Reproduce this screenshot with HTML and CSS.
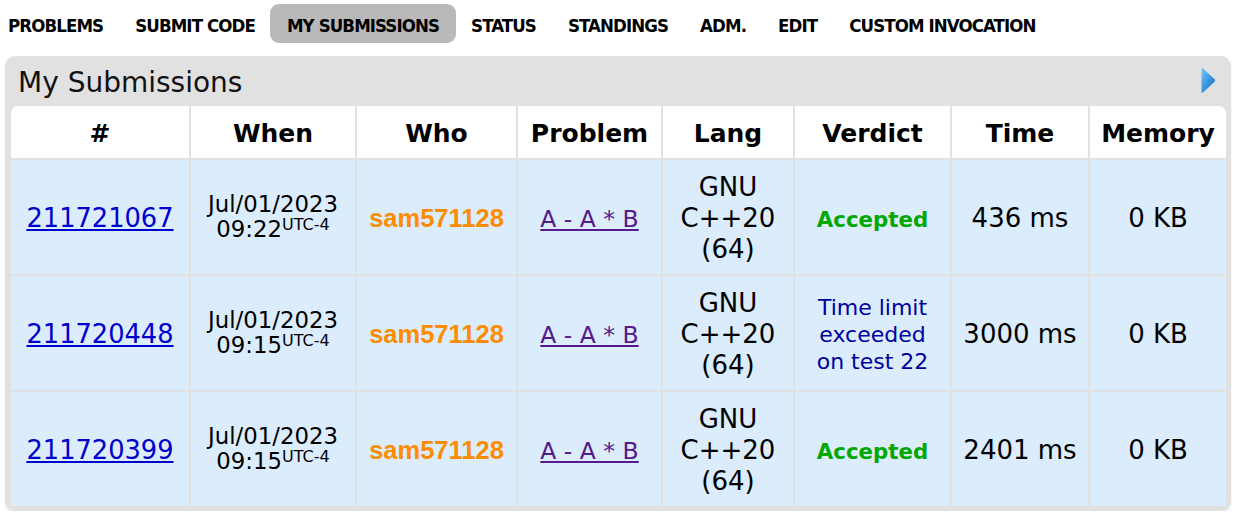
FILE: index.html
```html
<!DOCTYPE html>
<html>
<head>
<meta charset="utf-8">
<title>My Submissions</title>
<link rel="stylesheet" href="styles.css">
</head>
<body>
<nav class="menu">
  <a class="menu-item">PROBLEMS</a>
  <a class="menu-item">SUBMIT CODE</a>
  <a class="menu-item active">MY SUBMISSIONS</a>
  <a class="menu-item">STATUS</a>
  <a class="menu-item">STANDINGS</a>
  <a class="menu-item">ADM.</a>
  <a class="menu-item">EDIT</a>
  <a class="menu-item">CUSTOM INVOCATION</a>
</nav>
<div class="roundbox">
  <div class="caption">
    <span class="title">My Submissions</span>
    <svg class="arrow" width="16" height="27" viewBox="0 0 16 27">
      <defs>
        <linearGradient id="g" x1="0" y1="0" x2="1" y2="1">
          <stop offset="0" stop-color="#7cc3f5"/>
          <stop offset="0.5" stop-color="#3c97e0"/>
          <stop offset="1" stop-color="#1c6cc0"/>
        </linearGradient>
      </defs>
      <path d="M1.5 2 Q1.5 0.5 3 1.6 L14.6 12.2 Q15.6 13.5 14.6 14.8 L3 25.4 Q1.5 26.5 1.5 25 Z" fill="url(#g)"/>
    </svg>
  </div>
  <table class="status">
    <colgroup>
      <col class="c-id"><col class="c-when"><col class="c-who"><col class="c-prob">
      <col class="c-lang"><col class="c-verdict"><col class="c-time"><col class="c-mem">
    </colgroup>
    <thead>
      <tr>
        <th class="first">#</th><th>When</th><th>Who</th><th>Problem</th>
        <th>Lang</th><th>Verdict</th><th>Time</th><th class="last">Memory</th>
      </tr>
    </thead>
    <tbody>
      <tr>
        <td><a class="sid" href="#">211721067</a></td>
        <td class="when">Jul/01/2023<br>09:22<sup>UTC-4</sup></td>
        <td><span class="who">sam571128</span></td>
        <td><a class="prob" href="#">A - A * B</a></td>
        <td class="lang">GNU<br>C++20<br>(64)</td>
        <td><span class="ok">Accepted</span></td>
        <td>436 ms</td>
        <td>0 KB</td>
      </tr>
      <tr>
        <td><a class="sid" href="#">211720448</a></td>
        <td class="when">Jul/01/2023<br>09:15<sup>UTC-4</sup></td>
        <td><span class="who">sam571128</span></td>
        <td><a class="prob" href="#">A - A * B</a></td>
        <td class="lang">GNU<br>C++20<br>(64)</td>
        <td><span class="tle">Time limit<br>exceeded<br>on test 22</span></td>
        <td>3000 ms</td>
        <td>0 KB</td>
      </tr>
      <tr>
        <td><a class="sid" href="#">211720399</a></td>
        <td class="when">Jul/01/2023<br>09:15<sup>UTC-4</sup></td>
        <td><span class="who">sam571128</span></td>
        <td><a class="prob" href="#">A - A * B</a></td>
        <td class="lang">GNU<br>C++20<br>(64)</td>
        <td><span class="ok">Accepted</span></td>
        <td>2401 ms</td>
        <td>0 KB</td>
      </tr>
    </tbody>
  </table>
</div>
</body>
</html>
```
FILE: styles.css
```css
html, body {
  margin: 0;
  padding: 0;
  background: #ffffff;
}
body {
  font-family: "DejaVu Sans", Verdana, sans-serif;
  color: #000;
}
.menu {
  display: flex;
  align-items: flex-start;
  gap: 32px;
  padding: 4px 8px 0;
  height: 39px;
}
.menu-item {
  font-family: "DejaVu Sans Condensed", "DejaVu Sans", sans-serif;
  font-weight: bold;
  font-size: 18.5px;
  letter-spacing: -0.9px;
  line-height: 35px;
  padding-top: 4px;
  color: #000;
  text-decoration: none;
  white-space: nowrap;
}
.menu-item.active {
  background: #b9b9b9;
  border-radius: 9px;
  padding: 4px 17px 0;
  margin: 0 -17px;
}
.roundbox {
  margin: 13px 6px 0 5px;
  background: #e1e1e1;
  border-radius: 10px;
  padding: 0 3px 3px 4px;
  box-shadow: 0 2px 3px rgba(0,0,0,0.08);
}
.caption {
  height: 48px;
  display: flex;
  align-items: center;
  justify-content: space-between;
  padding: 5px 12px 0 9px;
  box-sizing: border-box;
}
.title {
  font-size: 28px;
  color: #111;
}
.arrow {
  display: block;
  margin-top: -5px;
}
.status {
  width: 100%;
  table-layout: fixed;
  border-collapse: separate;
  border-spacing: 2px;
}
.c-id { width: 178px; }
.c-when { width: 164px; }
.c-who { width: 159px; }
.c-prob { width: 143px; }
.c-lang { width: 130px; }
.c-verdict { width: 155px; }
.c-time { width: 136px; }
.c-mem { width: 136px; }
.status th {
  background: #fff;
  height: 49px;
  padding: 3px 0 0;
  font-size: 25px;
  font-weight: bold;
  text-align: center;
  vertical-align: middle;
}
.status th.first { border-top-left-radius: 7px; }
.status th.last { border-top-right-radius: 7px; }
.status td {
  background: #dbecfc;
  height: 111px;
  padding: 3px 0 0;
  font-size: 26px;
  text-align: center;
  vertical-align: middle;
  line-height: 31px;
}
.sid {
  color: #0000cc;
  font-size: 25.7px;
}
.status td.when {
  font-size: 22.8px;
  line-height: 25.5px;
  height: 114px;
  padding: 0;
}
.when sup {
  font-size: 16px;
  line-height: 0;
  vertical-align: 7px;
}
.who {
  font-family: "Liberation Sans", Arial, sans-serif;
  font-weight: bold;
  font-size: 25.5px;
  color: #ff8c00;
}
.prob {
  color: #551a8b;
  font-size: 23.5px;
}
.ok {
  color: #00a800;
  font-weight: bold;
  font-size: 21.3px;
}
.tle {
  display: inline-block;
  color: #0000a0;
  font-size: 22px;
  line-height: 27px;
}
```
